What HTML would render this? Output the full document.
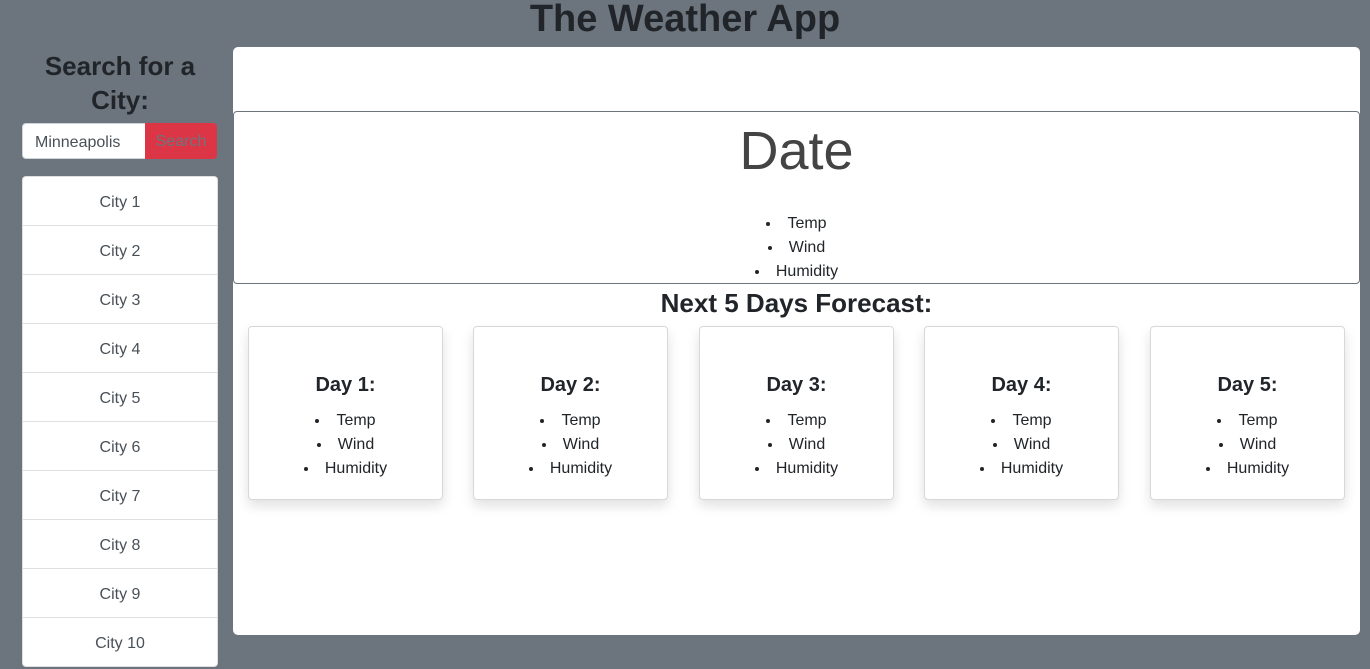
<!DOCTYPE html>
<html><head><style>
*{box-sizing:border-box;margin:0;padding:0}
body{width:1370px;height:667px;background:#6c757d;font-family:"Liberation Sans",sans-serif;color:#212529;position:relative;overflow:hidden}
.abs{position:absolute}
h1{position:absolute;left:0;width:1370px;top:-3px;text-align:center;font-size:38px;font-weight:bold;line-height:44px}
.side h2{position:absolute;left:22px;width:196px;top:49px;text-align:center;font-size:26px;line-height:34px;font-weight:bold}
.inp{left:22px;top:123px;width:124px;height:36px;background:#fff;border:1px solid #ced4da;border-radius:4px 0 0 4px;font-size:16px;color:#495057;padding:10px 0 0 12px}
.btn{left:145px;top:123px;width:72px;height:36px;background:#dc3545;border-radius:0 4px 4px 0;font-size:16px;color:#6c757d;text-align:center;padding-top:10px}
.list{left:22px;top:176px;width:196px;height:491px;background:#fff;border:1px solid rgba(0,0,0,.125);border-radius:4px}
.list div{height:49px;border-bottom:1px solid rgba(0,0,0,.125);text-align:center;line-height:51px;font-size:16px;color:#495057}
.main{left:233px;top:47px;width:1127px;height:588px;background:#fff;border-radius:5px}
.today{left:233px;top:111px;width:1127px;height:173px;border:1px solid #6c757d;border-radius:4px;background:#fff}
.date{position:absolute;left:0;width:100%;top:4px;text-align:center;font-size:54px;font-weight:normal;line-height:70px;color:#444}
ul{list-style:disc;list-style-position:inside;text-align:center;font-size:16px;line-height:24px}
.today ul{position:absolute;left:0;width:100%;top:100px}
.next{left:233px;width:1127px;top:286px;text-align:center;font-size:26px;font-weight:bold;line-height:34px}
.card{top:326px;width:195px;height:174px;border:1px solid #d8d8d8;border-radius:4px;background:#fff;box-shadow:0 6px 12px rgba(0,0,0,.12)}
.card h3{position:absolute;left:0;width:100%;top:46px;text-align:center;font-size:20px;font-weight:bold;line-height:24px}
.card ul{position:absolute;left:0;width:100%;top:82px}
</style></head><body>
<h1>The Weather App</h1>
<div class="side"><h2>Search for a City:</h2></div>
<div class="abs inp">Minneapolis</div>
<div class="abs btn">Search</div>
<div class="abs list"><div>City 1</div><div>City 2</div><div>City 3</div><div>City 4</div><div>City 5</div><div>City 6</div><div>City 7</div><div>City 8</div><div>City 9</div><div style="border:none">City 10</div></div>
<div class="abs main"></div>
<div class="abs today"><div class="date">Date</div><ul><li>Temp</li><li>Wind</li><li>Humidity</li></ul></div>
<div class="abs next">Next 5 Days Forecast:</div>
<div class="abs card" style="left:248px"><h3>Day 1:</h3><ul><li>Temp</li><li>Wind</li><li>Humidity</li></ul></div>
<div class="abs card" style="left:473px"><h3>Day 2:</h3><ul><li>Temp</li><li>Wind</li><li>Humidity</li></ul></div>
<div class="abs card" style="left:699px"><h3>Day 3:</h3><ul><li>Temp</li><li>Wind</li><li>Humidity</li></ul></div>
<div class="abs card" style="left:924px"><h3>Day 4:</h3><ul><li>Temp</li><li>Wind</li><li>Humidity</li></ul></div>
<div class="abs card" style="left:1150px"><h3>Day 5:</h3><ul><li>Temp</li><li>Wind</li><li>Humidity</li></ul></div>
</body></html>
